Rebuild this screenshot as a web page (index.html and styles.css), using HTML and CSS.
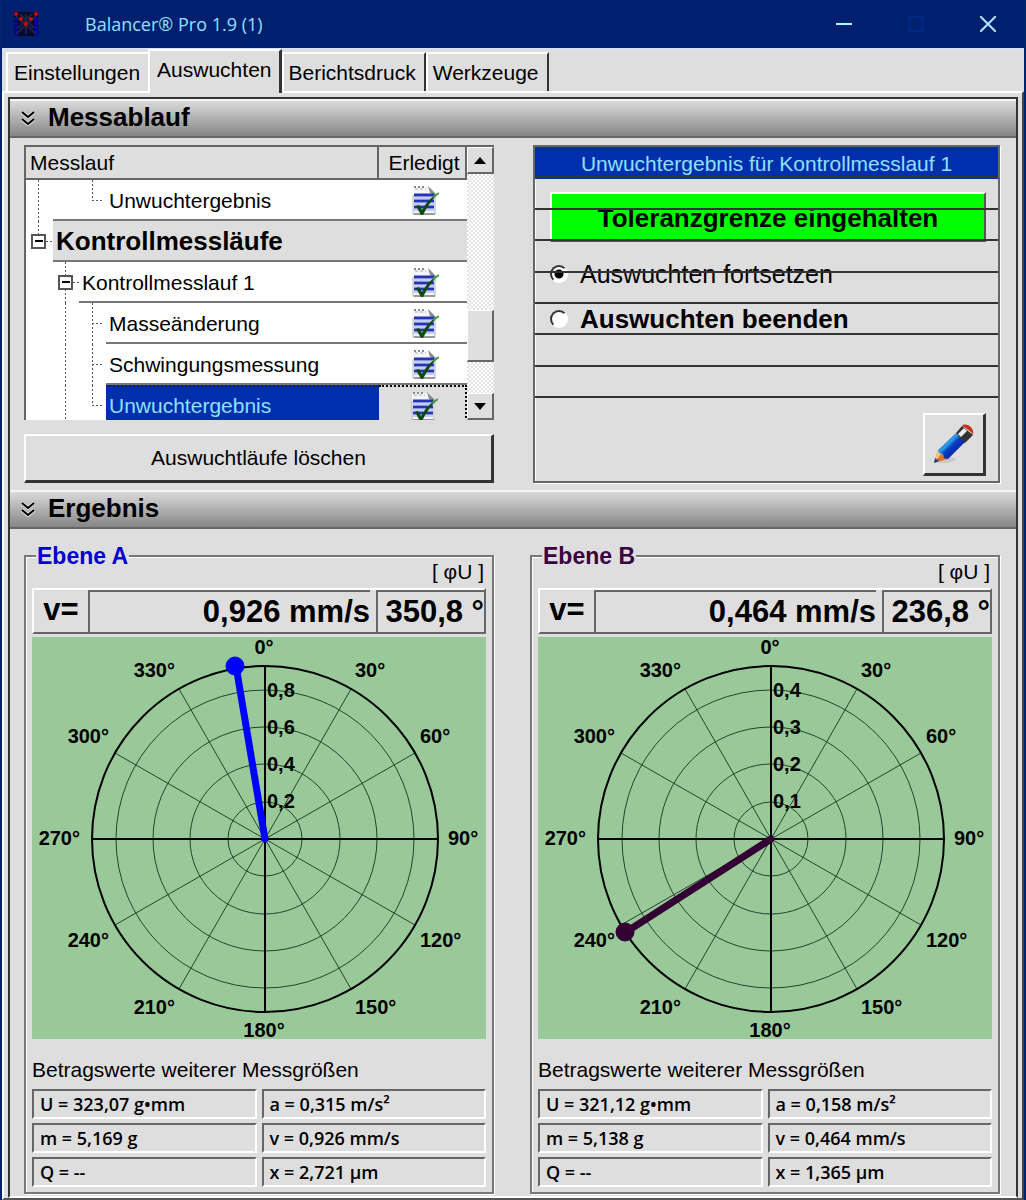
FILE: index.html
```html
<!DOCTYPE html>
<html lang="de">
  <head>
    <meta charset="UTF-8" />
    <meta name="viewport" content="width=device-width, initial-scale=1.0" />
    <title>Balancer® Pro 1.9 (1)</title>
    <link rel="stylesheet" href="styles.css">
  </head>
  <body>
    <!-- shared symbols -->
    <svg class="defs" width="0" height="0" aria-hidden="true">
      <symbol id="done" viewBox="0 0 28 30">
        <path d="M2 2h17l6 8v19H2z" fill="#f4f6fb"/>
        <path d="M17 1l8 8v2l-6-3z" fill="#8b8b8b"/>
        <path d="M3 2h12" stroke="#8a8a8a" stroke-width="2" stroke-dasharray="2 2"/>
        <path d="M4 4h11" stroke="#aaa" stroke-width="1" stroke-dasharray="3 2"/>
        <path d="M2 10v19M2 29h22V10" fill="none" stroke="#b4b4b4" stroke-width="1"/>
        <path d="M3 29h21" stroke="#999" stroke-width="2"/>
        <path d="M3 10h20M3 16h20M3 22h20" stroke="#2433b4" stroke-width="3"/>
        <path d="M3 13h20M3 19h20M3 25h20" stroke="#c3cdfa" stroke-width="2"/>
        <path d="M5 21l3-1 3 5C15 18 20 12 28 8 21 14 16 22 12 30h-2z" fill="#0d4a0d"/>
        <path d="M28 8l-6 4" stroke="#3fa03f" stroke-width="2"/>
      </symbol>
      <symbol id="chevrons" viewBox="0 0 14 16">
        <path d="M1 2l6 5 6-5M1 9l6 5 6-5" fill="none" stroke="#ddd" stroke-width="4"/>
        <path d="M1 2l6 5 6-5M1 9l6 5 6-5" fill="none" stroke="#000" stroke-width="2"/>
      </symbol>
      <symbol id="dial" viewBox="0 0 454 402">
        <g fill="none" stroke="#22452a" stroke-width="1">
          <circle cx="233" cy="202" r="37"/>
          <circle cx="233" cy="202" r="75"/>
          <circle cx="233" cy="202" r="112"/>
          <circle cx="233" cy="202" r="149"/>
          <path d="M147 52l172 300M83 116l300 172M83 288l300-172M147 352l172-300"/>
        </g>
        <g fill="none" stroke="#000" stroke-width="2">
          <circle cx="233" cy="202" r="173"/>
          <path d="M233 29v346M60 202h346"/>
        </g>
      </symbol>
    </svg>

    <div class="window">
      <header class="titlebar">
        <svg class="app-icon" width="24" height="24" viewBox="0 0 24 24">
          <rect width="24" height="24" fill="#070a2c"/>
          <path d="M2 4l20 18M22 4L2 22M6 2l14 14M18 2L4 16M12 2v20" stroke="#1c2440" stroke-width="2"/>
          <path d="M2 6v18M22 6v18" stroke="#0a0ab0" stroke-width="3" stroke-dasharray="3 1"/>
          <path d="M7 10v12M17 10v12" stroke="#10105c" stroke-width="2" stroke-dasharray="2 2"/>
          <g fill="#d40808">
            <circle cx="2" cy="2" r="2"/><circle cx="22" cy="2" r="2"/>
            <circle cx="7" cy="7" r="2"/><circle cx="17" cy="7" r="2"/>
            <circle cx="12" cy="12" r="2"/>
          </g>
        </svg>
        <span class="title">Balancer® Pro 1.9 (1)</span>
        <button class="win-btn" aria-label="Minimieren">
          <svg width="16" height="16"><path d="M0 8h16" stroke="#9ff" stroke-width="2"/></svg>
        </button>
        <button class="win-btn" aria-label="Maximieren" disabled>
          <svg width="16" height="16"><rect x="1" y="1" width="14" height="14" fill="none" stroke="#003590" stroke-width="1"/></svg>
        </button>
        <button class="win-btn" aria-label="Schließen">
          <svg width="16" height="16"><path d="M0 0l16 16M16 0L0 16" stroke="#aee6ff" stroke-width="2"/></svg>
        </button>
      </header>

      <nav class="tabs" role="tablist">
        <button class="tab" role="tab">Einstellungen</button>
        <button class="tab active" role="tab" aria-selected="true">Auswuchten</button>
        <button class="tab edge" role="tab">Berichtsdruck</button>
        <button class="tab edge" role="tab">Werkzeuge</button>
      </nav>

      <main class="page">
        <div class="panel">
          <h2 class="section-title"><svg width="14" height="16"><use href="#chevrons"/></svg>Messablauf</h2>
          <div class="section-body run">
            <div class="run-left">
              <div class="tree">
                <div class="tree-view">
                  <table>
                    <thead>
                      <tr><th>Messlauf</th><th class="done-col">Erledigt</th></tr>
                    </thead>
                    <tbody>
                      <tr>
                        <td><div class="node">
                          <svg class="guide" width="80" height="41"><path d="M12 0v41M66 0v20h12"/></svg>
                          <span class="node-text">Unwuchtergebnis</span>
                        </div></td>
                        <td class="done-col"><svg width="28" height="30"><use href="#done"/></svg></td>
                      </tr>
                      <tr class="group">
                        <td><div class="node">
                          <svg class="guide" width="27" height="41"><path d="M12 0v14M20 20h6"/><rect x="6" y="14" width="13" height="13"/><path class="minus" d="M9 20h8"/></svg>
                          <span class="node-text">Kontrollmessläufe</span>
                        </div></td>
                        <td class="done-col"></td>
                      </tr>
                      <tr>
                        <td><div class="node">
                          <svg class="guide" width="53" height="41"><path d="M39 0v14M39 27v14M47 20h6"/><rect x="33" y="14" width="13" height="13"/><path class="minus" d="M36 20h8"/></svg>
                          <span class="node-text">Kontrollmesslauf 1</span>
                        </div></td>
                        <td class="done-col"><svg width="28" height="30"><use href="#done"/></svg></td>
                      </tr>
                      <tr>
                        <td><div class="node">
                          <svg class="guide" width="80" height="41"><path d="M39 0v41M66 0v41M66 20h12"/></svg>
                          <span class="node-text">Masseänderung</span>
                        </div></td>
                        <td class="done-col"><svg width="28" height="30"><use href="#done"/></svg></td>
                      </tr>
                      <tr>
                        <td><div class="node">
                          <svg class="guide" width="80" height="41"><path d="M39 0v41M66 0v41M66 20h12"/></svg>
                          <span class="node-text">Schwingungsmessung</span>
                        </div></td>
                        <td class="done-col"><svg width="28" height="30"><use href="#done"/></svg></td>
                      </tr>
                      <tr class="selected">
                        <td><div class="node">
                          <svg class="guide" width="80" height="41"><path d="M39 0v41M66 0v20h12"/></svg>
                          <span class="node-text">Unwuchtergebnis</span>
                        </div></td>
                        <td class="done-col"><svg width="28" height="30"><use href="#done"/></svg></td>
                      </tr>
                    </tbody>
                  </table>
                </div>
                <div class="scrollbar">
                  <button aria-label="Nach oben"><svg width="12" height="7"><path d="M0 7l6-7 6 7z"/></svg></button>
                  <div class="track"><div class="thumb"></div></div>
                  <button aria-label="Nach unten"><svg width="12" height="7"><path d="M0 0l6 7 6-7z"/></svg></button>
                </div>
              </div>
              <button class="clear-btn">Auswuchtläufe löschen</button>
            </div>

            <form class="result">
              <h3>Unwuchtergebnis für Kontrollmesslauf 1</h3>
              <div class="result-body">
                <div class="status">Toleranzgrenze eingehalten</div>
                <label class="choice"><input type="radio" name="next" checked>Auswuchten fortsetzen</label>
                <label class="choice strong"><input type="radio" name="next">Auswuchten beenden</label>
                <button type="button" class="edit-btn" aria-label="Bearbeiten">
                  <svg width="42" height="42" viewBox="0 0 42 42">
                    <defs>
                      <linearGradient id="body" x1="0" y1="0" x2="1" y2="1">
                        <stop offset="0" stop-color="#1577d8"/><stop offset=".4" stop-color="#2a9be8"/>
                        <stop offset=".5" stop-color="#0a3cc0"/><stop offset="1" stop-color="#020f80"/>
                      </linearGradient>
                    </defs>
                    <path d="M4 40c8 1 14 0 20-4l-8-2z" fill="#c9c9c9"/>
                    <path d="M1 40l4-13 10 9z" fill="#d9772c"/>
                    <path d="M5 27l4 3-8 10z" fill="#f6c088"/>
                    <path d="M1 40l1-5 4 3z" fill="#17429c"/>
                    <path d="M5 27L23 10l9 9-17 17-4-1-1-4-4-1z" fill="url(#body)"/>
                    <path d="M23 10l6-7 11 9-8 8z" fill="#333"/>
                    <path d="M25 11l6-6 3 3-6 6z" fill="#eee"/>
                    <path d="M29 3c3-4 13 1 11 9-2-4-7-7-11-9z" fill="#c93218"/>
                  </svg>
                </button>
              </div>
              <div class="rules" aria-hidden="true">
                <span></span><span></span><span></span><span></span>
                <span></span><span></span><span></span><span></span>
              </div>
            </form>
          </div>

          <h2 class="section-title"><svg width="14" height="16"><use href="#chevrons"/></svg>Ergebnis</h2>
          <div class="section-body planes">
            <fieldset class="plane">
              <legend class="plane-a">Ebene A</legend>
              <div class="unit">[ φU ]</div>
              <div class="reading">
                <span class="symbol">v=</span>
                <output class="value">0,926 mm/s</output>
                <output class="angle">350,8 °</output>
              </div>
              <svg class="chart" viewBox="0 0 454 402">
                <use href="#dial" width="454" height="402"/>
                <g class="dial-text">
                  <text x="232" y="17" text-anchor="middle">0°</text>
                  <text x="323" y="40">30°</text>
                  <text x="388" y="106">60°</text>
                  <text x="416" y="208">90°</text>
                  <text x="388" y="310">120°</text>
                  <text x="323" y="377">150°</text>
                  <text x="232" y="400" text-anchor="middle">180°</text>
                  <text x="143" y="377" text-anchor="end">210°</text>
                  <text x="77" y="310" text-anchor="end">240°</text>
                  <text x="48" y="208" text-anchor="end">270°</text>
                  <text x="77" y="106" text-anchor="end">300°</text>
                  <text x="143" y="40" text-anchor="end">330°</text>
                  <text x="235" y="60">0,8</text>
                  <text x="235" y="97">0,6</text>
                  <text x="235" y="134">0,4</text>
                  <text x="235" y="171">0,2</text>
                </g>
                <g class="needle-a">
                  <path d="M233 202L204 29"/>
                  <circle cx="203" cy="29" r="9"/>
                </g>
              </svg>
              <h3>Betragswerte weiterer Messgrößen</h3>
              <div class="measures">
                <output>U = 323,07 g•mm</output>
                <output>a = 0,315 m/s²</output>
                <output>m = 5,169 g</output>
                <output>v = 0,926 mm/s</output>
                <output>Q = --</output>
                <output>x = 2,721 µm</output>
              </div>
            </fieldset>

            <fieldset class="plane">
              <legend class="plane-b">Ebene B</legend>
              <div class="unit">[ φU ]</div>
              <div class="reading">
                <span class="symbol">v=</span>
                <output class="value">0,464 mm/s</output>
                <output class="angle">236,8 °</output>
              </div>
              <svg class="chart" viewBox="0 0 454 402">
                <use href="#dial" width="454" height="402"/>
                <g class="dial-text">
                  <text x="232" y="17" text-anchor="middle">0°</text>
                  <text x="323" y="40">30°</text>
                  <text x="388" y="106">60°</text>
                  <text x="416" y="208">90°</text>
                  <text x="388" y="310">120°</text>
                  <text x="323" y="377">150°</text>
                  <text x="232" y="400" text-anchor="middle">180°</text>
                  <text x="143" y="377" text-anchor="end">210°</text>
                  <text x="77" y="310" text-anchor="end">240°</text>
                  <text x="48" y="208" text-anchor="end">270°</text>
                  <text x="77" y="106" text-anchor="end">300°</text>
                  <text x="143" y="40" text-anchor="end">330°</text>
                  <text x="235" y="60">0,4</text>
                  <text x="235" y="97">0,3</text>
                  <text x="235" y="134">0,2</text>
                  <text x="235" y="171">0,1</text>
                </g>
                <g class="needle-b">
                  <path d="M233 202L88 295"/>
                  <circle cx="87" cy="295" r="9"/>
                </g>
              </svg>
              <h3>Betragswerte weiterer Messgrößen</h3>
              <div class="measures">
                <output>U = 321,12 g•mm</output>
                <output>a = 0,158 m/s²</output>
                <output>m = 5,138 g</output>
                <output>v = 0,464 mm/s</output>
                <output>Q = --</output>
                <output>x = 1,365 µm</output>
              </div>
            </fieldset>
          </div>
        </div>
      </main>
    </div>
  </body>
</html>
```
FILE: styles.css
```css
* {
  box-sizing: border-box;
}
body {
  margin: 0;
  background-color: #dedede;
  color: #000;
  font-family: "Liberation Sans", Arial, sans-serif;
  font-size: 21px;
}
button {
  font: inherit;
  color: inherit;
  padding: 0;
  background-color: #dedede;
}
h2, h3 {
  margin: 0;
}
.defs {
  position: absolute;
}
.window {
  border: solid #00246e;
  border-width: 0 2px;
}

/* title bar */
.titlebar {
  display: flex;
  align-items: center;
  height: 49px;
  padding-left: 12px;
  background-color: #001f6f;
  border-bottom: 1px solid #cfe6ff;
}
.title {
  flex: 1;
  margin-left: 47px;
  font-family: "Open Sans", sans-serif;
  font-size: 18px;
  color: #8fe0ff;
}
.win-btn {
  display: flex;
  align-items: center;
  justify-content: center;
  width: 72px;
  height: 48px;
  border: none;
  background: none;
}

/* tabs */
.tabs {
  display: flex;
  align-items: flex-end;
  height: 42px;
  padding-left: 4px;
}
.tab {
  height: 39px;
  padding: 0 8px 0 6px;
  border: solid #fff;
  border-width: 2px 0 0 2px;
}
.tab.active {
  position: relative;
  height: 44px;
  margin-bottom: -2px;
  padding: 0 7px 4px;
  border-right: 3px solid #333;
}
.tab.edge {
  padding: 0 8px 0 5px;
  border-right: 2px solid #333;
}
.page {
  padding: 4px 4px 0;
  border: 2px solid #fff;
  border-right-color: #444;
  border-bottom-color: #555;
}
.panel {
  border: 2px solid #333;
  border-bottom-color: #fff;
}
.section-title {
  display: flex;
  align-items: center;
  gap: 13px;
  height: 39px;
  padding: 0 11px 2px;
  border-top: 2px solid #f4f4f4;
  border-bottom: 2px solid #666;
  background: linear-gradient(#dadada, #868686);
  font-size: 26px;
}
.section-body {
  display: grid;
  grid-template-columns: 1fr 1fr;
  gap: 36px;
  padding: 7px 16px 7px 14px;
}

/* run tree */
.run-left {
  display: flex;
  flex-direction: column;
  gap: 14px;
}
.tree {
  display: flex;
  height: 275px;
  border: solid #666;
  border-width: 2px 0 0 2px;
  background-color: #fff;
}
.tree-view {
  flex: 1;
  overflow: hidden;
}
.tree table {
  width: 100%;
  border-collapse: separate;
  border-spacing: 0;
}
.tree th {
  height: 33px;
  padding: 0 0 0 4px;
  border: solid #666;
  border-width: 0 2px 2px 0;
  background-color: #dedede;
  font-weight: normal;
  text-align: left;
}
.tree td {
  height: 41px;
  padding: 0;
}
.tree .done-col {
  width: 88px;
  padding: 0 0 0 4px;
  text-align: center;
}
.tree td.done-col {
  border-bottom: 2px solid #777;
}
.tree td svg {
  display: block;
  margin: auto;
}
.node {
  display: flex;
}
.tree .guide {
  flex: none;
  margin: 0;
  fill: none;
  stroke: #555;
  stroke-width: 1;
  shape-rendering: crispEdges;
}
.guide path {
  stroke-dasharray: 2 2;
}
.guide rect {
  stroke-width: 2;
}
.guide .minus {
  stroke: #000;
  stroke-width: 2;
  stroke-dasharray: none;
}
.node-text {
  flex: 1;
  height: 41px;
  padding-left: 3px;
  border-bottom: 2px solid #777;
  line-height: 41px;
}
.group .node-text {
  box-shadow: 0 -2px #777;
  font-size: 26px;
  font-weight: bold;
}
.group .node-text,
.group .done-col {
  background-color: #dedede;
}
.selected .node-text {
  border-top: 2px dotted #223;
  background-color: #002fad;
  color: #8fe0ff;
  line-height: 37px;
}
.selected .done-col {
  border-top: 2px dotted #000;
  border-right: 2px dotted #000;
  background-color: #dedede;
}
.scrollbar {
  display: flex;
  flex-direction: column;
  width: 27px;
}
.scrollbar button {
  display: flex;
  align-items: center;
  justify-content: center;
  height: 27px;
  border: 1px solid #fff;
  border-right: 2px solid #666;
  border-bottom: 2px solid #666;
}
.track {
  flex: 1;
  display: grid;
  grid-template-rows: 137fr 52fr 31fr;
  background: repeating-conic-gradient(#fff 0 25%, #e2e2e2 0 50%) 0 0 / 4px 4px;
}
.thumb {
  grid-row: 2;
  border: 1px solid #fff;
  border-right: 2px solid #666;
  border-bottom: 2px solid #666;
  background-color: #dedede;
}
.clear-btn {
  height: 49px;
  border: 2px solid #fff;
  border-right: 3px solid #333;
  border-bottom: 3px solid #333;
}

/* result form */
.result {
  position: relative;
  display: flex;
  flex-direction: column;
  margin-left: 3px;
  border: 2px solid #666;
  box-shadow: 1px 1px #fff, inset 1px 1px #fff;
}
.result h3 {
  height: 32px;
  background-color: #002fad;
  color: #8fe0ff;
  font-size: 21px;
  font-weight: normal;
  line-height: 34px;
  text-align: center;
}
.result-body {
  flex: 1;
  display: flex;
  flex-direction: column;
  gap: 13px;
  padding: 13px 12px 5px 15px;
}
.status {
  height: 50px;
  margin-bottom: 3px;
  border: 2px solid #fff;
  border-right-color: #555;
  border-bottom-color: #555;
  background-color: #0f0;
  font-size: 26px;
  font-weight: bold;
  line-height: 48px;
  text-align: center;
}
.choice {
  display: flex;
  align-items: center;
  gap: 12px;
  height: 32px;
  font-size: 25px;
}
.choice.strong {
  font-size: 26px;
  font-weight: bold;
}
.choice input {
  appearance: none;
  width: 18px;
  height: 18px;
  margin: 0;
  border: 2px solid #333;
  border-right-color: #fff;
  border-bottom-color: #fff;
  border-radius: 50%;
  background-color: #fff;
}
.choice input:checked {
  background: radial-gradient(#000 4px, #fff 5px);
}
.edit-btn {
  display: flex;
  align-items: center;
  justify-content: center;
  width: 63px;
  height: 63px;
  margin-top: auto;
  margin-left: auto;
  border: 2px solid #fff;
  border-right: 3px solid #333;
  border-bottom: 3px solid #333;
}
.rules {
  position: absolute;
  inset: 0 0 auto;
  display: flex;
  flex-direction: column;
  height: 251px;
  pointer-events: none;
}
.rules span {
  flex: 1;
  border-bottom: 2px solid #333;
}

/* planes */
.planes {
  padding-top: 21px;
  padding-bottom: 2px;
}
.plane {
  min-width: 0;
  margin: 0;
  padding: 0 6px 5px;
  border: 2px solid #777;
  box-shadow: 1px 1px #fff, inset 1px 1px #fff;
}
.plane legend {
  margin-left: 4px;
  padding: 0 1px;
  background-color: #dedede;
  font-size: 23px;
  font-weight: bold;
  line-height: 12px;
}
.plane-a {
  color: #0000d0;
}
.plane-b {
  color: #3a003f;
}
.unit {
  padding-right: 2px;
  line-height: 20px;
  text-align: right;
}
.reading {
  display: flex;
  height: 46px;
  margin-top: 6px;
  border: 2px solid #fff;
  border-right-color: #666;
  border-bottom-color: #666;
  font-size: 31px;
  font-weight: bold;
  line-height: 40px;
}
.symbol {
  width: 54px;
  text-align: center;
}
.value, .angle {
  border: solid #666;
  border-width: 2px 0 0 2px;
  text-align: right;
}
.value {
  flex: 1;
}
.angle {
  width: 108px;
  margin-left: 6px;
}
.chart {
  display: block;
  width: 100%;
  margin-top: 3px;
  background-color: #99c999;
}
.dial-text {
  font-size: 20px;
  font-weight: bold;
}
.needle-a {
  fill: #00f;
  stroke: #00f;
}
.needle-b {
  fill: #303;
  stroke: #303;
}
.needle-a path, .needle-b path {
  stroke-width: 7;
  stroke-linecap: round;
}
.plane h3 {
  margin: 19px 0 7px;
  font-size: 21px;
  font-weight: normal;
  line-height: 24px;
}
.measures {
  display: grid;
  grid-template-columns: 1fr 1fr;
  gap: 4px 5px;
}
.measures output {
  height: 30px;
  padding-left: 6px;
  border: 2px solid #666;
  border-right-color: #fff;
  border-bottom-color: #fff;
  font-family: "Open Sans", sans-serif;
  font-size: 18px;
  font-weight: 600;
  line-height: 26px;
}
```
